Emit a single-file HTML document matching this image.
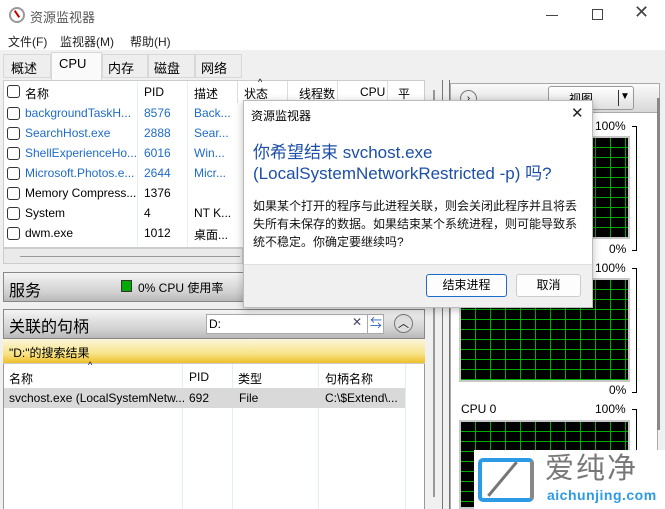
<!DOCTYPE html>
<html><head><meta charset="utf-8"><style>
*{box-sizing:border-box;margin:0;padding:0}
html,body{overflow:hidden}
body{width:665px;height:509px;overflow:hidden;background:#f0f0f0;font-family:"Liberation Sans","Noto Sans CJK SC",sans-serif;font-size:12px;color:#000;position:relative}
.a{position:absolute;white-space:nowrap}
.blue{color:#1e6bc8}
.cb{position:absolute;width:13px;height:13px;border:1px solid #333;border-radius:3px;background:#fff}
.grid{position:absolute;background-color:#000;border:2px solid #c8c8c8;
background-image:linear-gradient(#0a0 1px,transparent 1px),linear-gradient(90deg,#0a0 1px,transparent 1px);background-size:15px 10px;background-position:-1px -1px}
.bar{background:linear-gradient(#f4f4f4,#d0d0d0 70%,#b8b8b8);border:1px solid #888}
</style></head><body>
<div class="a" style="left:0;top:0;width:665px;height:50px;background:#fff"></div>
<div class="a" style="left:9px;top:7px;width:16px;height:16px;border-radius:50%;border:2px solid #999;background:#fff"><div style="position:absolute;left:5px;top:1px;width:2px;height:8px;background:#c00;transform:rotate(-35deg)"></div></div>
<div class="a" style="left:30px;top:7px;font-size:13px;color:#555">资源监视器</div>
<div class="a" style="left:546px;top:15px;width:12px;height:1px;background:#444"></div>
<div class="a" style="left:592px;top:9px;width:11px;height:11px;border:1px solid #444"></div>
<div class="a" style="left:634px;top:2px;font-size:18px;color:#444">✕</div>
<div class="a" style="left:8px;top:33px;font-size:12px;color:#222">文件(F)</div>
<div class="a" style="left:60px;top:33px;font-size:12px;color:#222">监视器(M)</div>
<div class="a" style="left:130px;top:33px;font-size:12px;color:#222">帮助(H)</div>
<div class="a" style="left:3px;top:54px;width:48px;height:24px;border:1px solid #d8d8d8;background:#eee;padding:3px 7px;font-size:13px">概述</div>
<div class="a" style="left:51px;top:52px;width:51px;height:28px;border:1px solid #d8d8d8;border-bottom:none;background:#fafafa;padding:3px 7px;font-size:13px">CPU</div>
<div class="a" style="left:102px;top:54px;width:46px;height:24px;border:1px solid #d8d8d8;background:#eee;padding:3px 5px;font-size:13px">内存</div>
<div class="a" style="left:148px;top:54px;width:47px;height:24px;border:1px solid #d8d8d8;background:#eee;padding:3px 5px;font-size:13px">磁盘</div>
<div class="a" style="left:195px;top:54px;width:47px;height:24px;border:1px solid #d8d8d8;background:#eee;padding:3px 5px;font-size:13px">网络</div>
<div class="a" style="left:3px;top:80px;width:422px;height:168px;background:#fff;border:1px solid #ccc"></div>
<div class="a" style="left:137px;top:81px;width:1px;height:166px;background:#e8eef5"></div>
<div class="a" style="left:187px;top:81px;width:1px;height:166px;background:#e8eef5"></div>
<div class="a" style="left:237px;top:81px;width:1px;height:22px;background:#ddd"></div>
<div class="a" style="left:287px;top:81px;width:1px;height:22px;background:#ddd"></div>
<div class="a" style="left:337px;top:81px;width:1px;height:22px;background:#ddd"></div>
<div class="a" style="left:387px;top:81px;width:1px;height:22px;background:#ddd"></div>
<div class="cb" style="left:7px;top:85px"></div><div class="a" style="left:25px;top:85px">名称</div>
<div class="a" style="left:144px;top:85px">PID</div><div class="a" style="left:194px;top:85px">描述</div>
<div class="a" style="left:244px;top:85px">状态</div><div class="a" style="left:258px;top:77px;font-size:9px">^</div>
<div class="a" style="left:299px;top:85px">线程数</div><div class="a" style="left:360px;top:85px">CPU</div><div class="a" style="left:398px;top:85px">平</div>
<div class="cb" style="left:7px;top:107px"></div><div class="a blue" style="left:25px;top:106px">backgroundTaskH...</div><div class="a blue" style="left:144px;top:106px">8576</div><div class="a blue" style="left:194px;top:106px">Back...</div>
<div class="cb" style="left:7px;top:127px"></div><div class="a blue" style="left:25px;top:126px">SearchHost.exe</div><div class="a blue" style="left:144px;top:126px">2888</div><div class="a blue" style="left:194px;top:126px">Sear...</div>
<div class="cb" style="left:7px;top:147px"></div><div class="a blue" style="left:25px;top:146px">ShellExperienceHo...</div><div class="a blue" style="left:144px;top:146px">6016</div><div class="a blue" style="left:194px;top:146px">Win...</div>
<div class="cb" style="left:7px;top:167px"></div><div class="a blue" style="left:25px;top:166px">Microsoft.Photos.e...</div><div class="a blue" style="left:144px;top:166px">2644</div><div class="a blue" style="left:194px;top:166px">Micr...</div>
<div class="cb" style="left:7px;top:187px"></div><div class="a" style="left:25px;top:186px">Memory Compress...</div><div class="a" style="left:144px;top:186px">1376</div>
<div class="cb" style="left:7px;top:207px"></div><div class="a" style="left:25px;top:206px">System</div><div class="a" style="left:144px;top:206px">4</div><div class="a" style="left:194px;top:206px">NT K...</div>
<div class="cb" style="left:7px;top:227px"></div><div class="a" style="left:25px;top:226px">dwm.exe</div><div class="a" style="left:144px;top:226px">1012</div><div class="a" style="left:194px;top:226px">桌面...</div>
<div class="a" style="left:3px;top:248px;width:240px;height:16px;background:#eaeaea;border:1px solid #ccc"></div>
<div class="a" style="left:20px;top:256px;width:220px;height:1px;background:#999"></div>
<div class="a bar" style="left:3px;top:272px;width:245px;height:30px"></div>
<div class="a" style="left:9px;top:277px;font-size:16px">服务</div>
<div class="a" style="left:121px;top:280px;width:11px;height:12px;background:#0a0;border:1px solid #333"></div>
<div class="a" style="left:138px;top:279px;font-size:12px">0% CPU 使用率</div>
<div class="a bar" style="left:3px;top:309px;width:422px;height:30px"></div>
<div class="a" style="left:9px;top:313px;font-size:16px">关联的句柄</div>
<div class="a" style="left:206px;top:314px;width:178px;height:20px;background:#fff;border:1px solid #aaa;padding:2px 2px;font-size:12px">D:</div>
<div class="a" style="left:352px;top:315px;font-size:12px;color:#446">✕</div>
<div class="a" style="left:367px;top:314px;width:18px;height:20px;border-left:1px solid #aaa;font-size:12px;color:#2a62b8;padding-left:2px">⇆</div>
<div class="a" style="left:394px;top:314px;width:19px;height:19px;border-radius:50%;border:1px solid #777;background:#ddd;text-align:center;font-size:11px;line-height:18px">︿</div>
<div class="a" style="left:3px;top:339px;width:422px;height:25px;background:linear-gradient(#fbf6dc,#f8e48a 60%,#efc02a);border-bottom:1px solid #ccc;padding:5px 6px;font-size:12px">"D:"的搜索结果</div>
<div class="a" style="left:3px;top:364px;width:422px;height:145px;background:#fff;border-left:1px solid #999;border-right:1px solid #999"></div>
<div class="a" style="left:182px;top:364px;width:1px;height:145px;background:#e4ecf5"></div>
<div class="a" style="left:232px;top:364px;width:1px;height:145px;background:#e4ecf5"></div>
<div class="a" style="left:318px;top:364px;width:1px;height:145px;background:#e4ecf5"></div>
<div class="a" style="left:405px;top:364px;width:1px;height:145px;background:#e4ecf5"></div>
<div class="a" style="left:88px;top:360px;font-size:9px">^</div>
<div class="a" style="left:9px;top:370px">名称</div><div class="a" style="left:189px;top:370px">PID</div><div class="a" style="left:238px;top:370px">类型</div><div class="a" style="left:325px;top:370px">句柄名称</div>
<div class="a" style="left:4px;top:388px;width:401px;height:20px;background:#d9d9d9"></div>
<div class="a" style="left:9px;top:391px">svchost.exe (LocalSystemNetw...</div><div class="a" style="left:189px;top:391px">692</div><div class="a" style="left:239px;top:391px">File</div><div class="a" style="left:325px;top:391px">C:\$Extend\...</div>
<div class="a" style="left:433px;top:90px;width:2px;height:407px;background:#999"></div>
<div class="a" style="left:442px;top:80px;width:1px;height:429px;background:#777"></div>
<div class="a" style="left:449px;top:80px;width:1px;height:429px;background:#777"></div>
<div class="a" style="left:450px;top:83px;width:210px;height:30px;background:linear-gradient(#fafafa,#d8d8d8);border:1px solid #aaa"></div>
<div class="a" style="left:460px;top:90px;width:17px;height:17px;border-radius:50%;border:1px solid #777;background:#eee;font-size:10px;text-align:center;line-height:15px">›</div>
<div class="a" style="left:548px;top:86px;width:86px;height:24px;border:1px solid #999;border-radius:3px;background:linear-gradient(#fff,#e0e0e0);font-size:12px;padding:3px 20px">视图</div>
<div class="a" style="left:618px;top:90px;width:1px;height:16px;background:#333"></div>
<div class="a" style="left:620px;top:91px;font-size:10px">▼</div>
<div class="a" style="left:450px;top:113px;width:208px;height:396px;background:#fff;border-left:1px solid #aaa;border-right:1px solid #aaa"></div>
<div class="a" style="left:657px;top:98px;width:3px;height:332px;background:#888"></div>
<div class="a" style="left:595px;top:119px;font-size:12px">100%</div>
<div class="a" style="left:632px;top:126px;width:5px;height:125px;border:1px solid #000;border-left:none"></div>
<div class="grid" style="left:459px;top:136px;width:171px;height:103px"></div>
<div class="a" style="left:609px;top:242px;font-size:12px">0%</div>
<div class="a" style="left:595px;top:261px;font-size:12px">100%</div>
<div class="a" style="left:632px;top:268px;width:5px;height:125px;border:1px solid #000;border-left:none"></div>
<div class="grid" style="left:459px;top:278px;width:171px;height:104px"></div>
<div class="a" style="left:609px;top:383px;font-size:12px">0%</div>
<div class="a" style="left:461px;top:402px;font-size:12px">CPU 0</div>
<div class="a" style="left:595px;top:402px;font-size:12px">100%</div>
<div class="a" style="left:632px;top:409px;width:5px;height:100px;border-right:1px solid #000;border-top:1px solid #000"></div>
<div class="grid" style="left:459px;top:420px;width:171px;height:89px"></div>
<div class="a" style="left:243px;top:100px;width:350px;height:208px;background:#fff;border:1px solid #bbb;box-shadow:0 2px 8px rgba(0,0,0,.25)"></div>
<div class="a" style="left:251px;top:107px;font-size:12px">资源监视器</div>
<div class="a" style="left:571px;top:104px;font-size:15px;color:#222">✕</div>
<div class="a" style="left:253px;top:142px;font-size:17px;color:#1c4fa8;line-height:21px">你希望结束 svchost.exe<br>(LocalSystemNetworkRestricted -p) 吗?</div>
<div class="a" style="left:253px;top:197px;font-size:12px;line-height:18px;color:#111">如果某个打开的程序与此进程关联，则会关闭此程序并且将丢<br>失所有未保存的数据。如果结束某个系统进程，则可能导致系<br>统不稳定。你确定要继续吗?</div>
<div class="a" style="left:244px;top:264px;width:348px;height:43px;background:#f0f0f0;border-top:1px solid #e0e0e0"></div>
<div class="a" style="left:426px;top:274px;width:81px;height:23px;background:#fdfdfd;border:1px solid #1a6dcc;border-radius:3px;text-align:center;line-height:21px">结束进程</div>
<div class="a" style="left:516px;top:274px;width:65px;height:23px;background:#fdfdfd;border:1px solid #ccc;border-radius:3px;text-align:center;line-height:21px">取消</div>
<div class="a" style="left:474px;top:450px;width:191px;height:59px;background:#fff;overflow:hidden">
<div class="a" style="left:4px;top:8px;width:56px;height:44px;border:4px solid #2b9be6;border-radius:5px;border-right-color:#888"></div>
<div class="a" style="left:27px;top:7px;width:3px;height:44px;background:#777;transform:rotate(40deg)"></div>
<div class="a" style="left:71px;top:2px;font-size:29px;line-height:34px;color:#777;letter-spacing:2px">爱纯净</div>
<div class="a" style="left:73px;top:37px;font-size:14px;line-height:16px;color:#2b9be6;font-weight:bold;letter-spacing:0.5px">aichunjing.com</div>
</div>
</body></html>
